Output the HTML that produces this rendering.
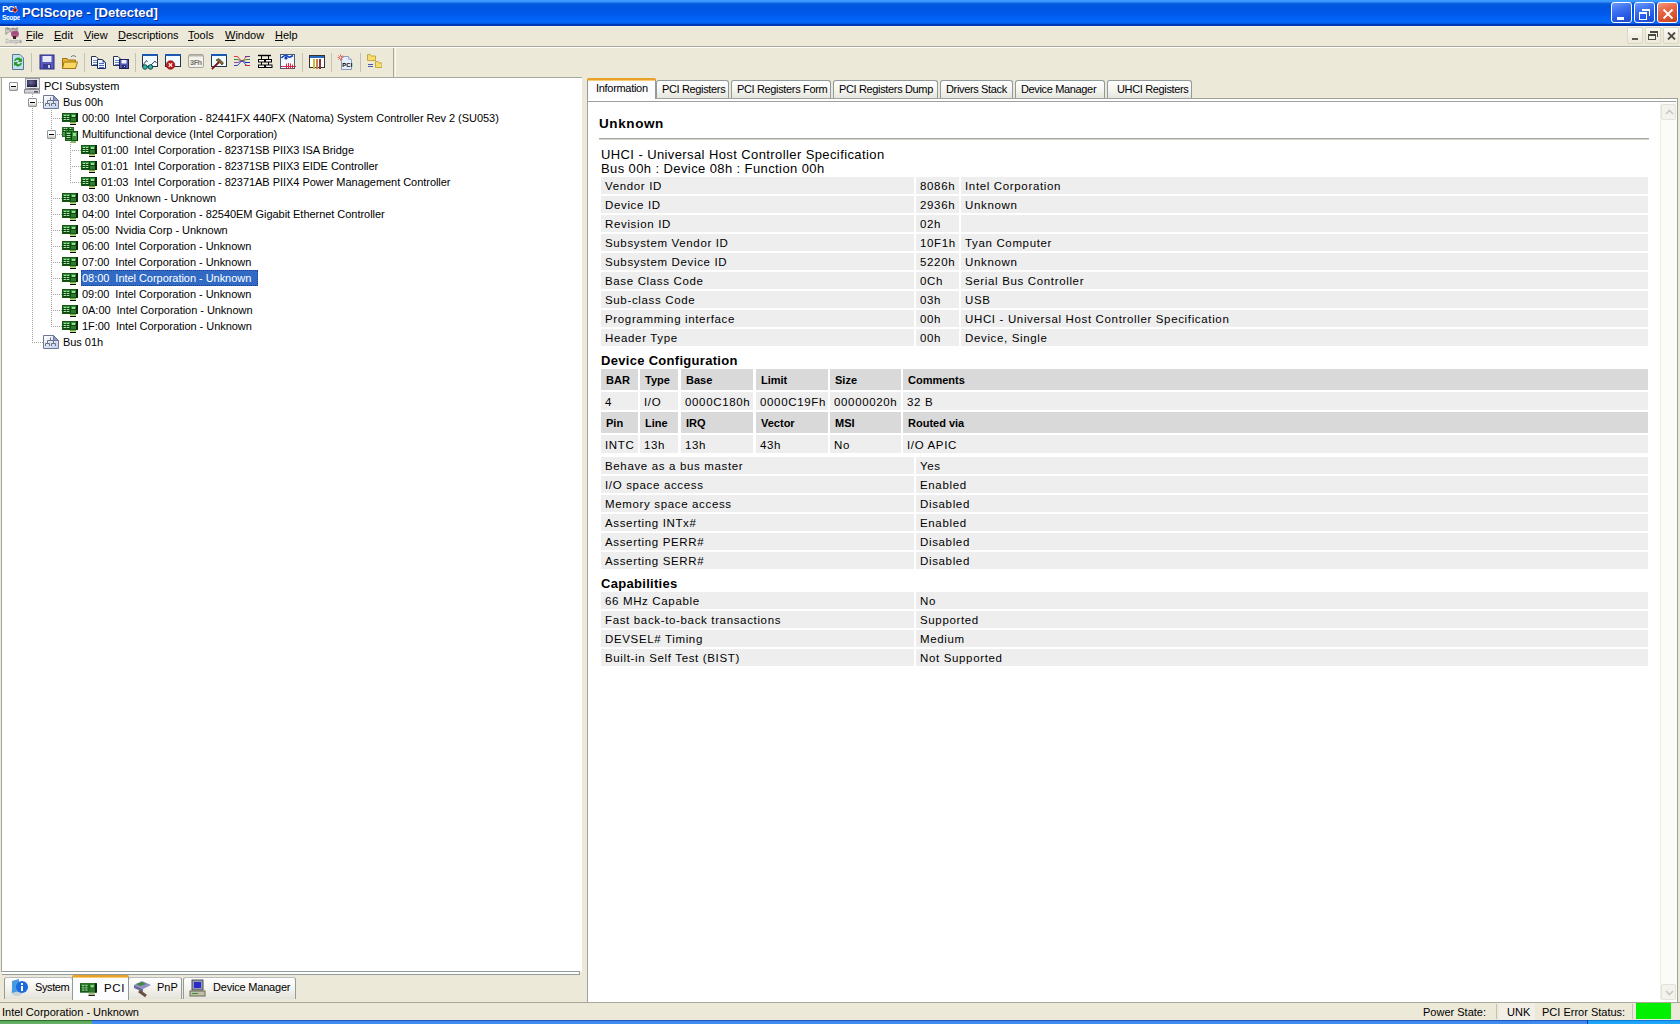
<!DOCTYPE html><html><head><meta charset="utf-8"><title>PCIScope</title><style>
*{box-sizing:border-box;margin:0;padding:0}
html,body{width:1680px;height:1024px;overflow:hidden;background:#ECE9D8;font-family:"Liberation Sans",sans-serif;font-size:11px;color:#000;position:relative}
.a{position:absolute}
.nw{white-space:nowrap}
#title{left:0;top:0;width:1680px;height:26px;background:linear-gradient(#3D9CFF 0px,#3A97FF 1.5px,#2478F0 2.5px,#0B62DD 3.5px,#005ADF 4.5px,#0055E2 7px,#0056E5 11px,#005BEE 15px,#0062F7 18px,#0866FA 22px,#0058E4 23.5px,#0038B4 24.5px,#0036B0 26px)}
#title .t{left:22px;top:5px;color:#fff;font-weight:bold;font-size:13px;line-height:16px;text-shadow:1px 1px 0 #0B2A8C}
.wb{top:2px;width:21px;height:21px;border:1px solid #fff;border-radius:3px;background:linear-gradient(160deg,#6B9BFA 0%,#3F73F0 35%,#2558E4 70%,#1D4CCB 100%)}
.mi{top:26px;line-height:16px;padding-top:1px}
.mdi{top:27px;width:16px;height:17px;border:1px solid #DCD8C6;border-radius:2px;background:linear-gradient(#FBFAF5,#ECE9D8)}
#tb{left:0;top:48px;width:394px;height:30px;border-bottom:1px solid #A9A798}
.sep{top:53px;width:1px;height:19px;background:#C5C2B2}
.tn{position:absolute;white-space:nowrap;font-size:11px;line-height:16px;height:16px;letter-spacing:-0.04px}
.ex{position:absolute;width:9px;height:9px;border:1px solid #929496;border-radius:1px;background:linear-gradient(#fff 45%,#C6C6C2)}
.ex:after{content:"";position:absolute;left:1px;top:3px;width:5px;height:1px;background:#000}
.dv{position:absolute;width:1px;background:repeating-linear-gradient(#A0A0A0 0 1px,transparent 1px 2px)}
.dh{position:absolute;height:1px;background:repeating-linear-gradient(90deg,#A0A0A0 0 1px,transparent 1px 2px)}
.tab{position:absolute;top:80px;height:18px;border:1px solid #919B9C;border-bottom:none;border-radius:3px 3px 0 0;background:linear-gradient(#FFFFFF,#F3F3EF 60%,#E6E5DE);line-height:17px;padding-left:5px;white-space:nowrap;letter-spacing:-0.35px}
.r{position:absolute;height:17px;background:#EEEEEE;white-space:nowrap;font-size:11.5px;letter-spacing:0.65px;line-height:18px;padding-left:4px}
.h{position:absolute;height:21px;background:#D9D9D9;white-space:nowrap;font-size:11px;font-weight:bold;line-height:23px;padding-left:5px}
.d{position:absolute;height:18px;background:#EEEEEE;white-space:nowrap;font-size:11.5px;letter-spacing:0.65px;line-height:21px;padding-left:4px}
.btab{position:absolute;top:977px;height:22px;border:1px solid #919B9C;border-top-color:#B8BCC0;border-bottom:none;border-radius:3px 3px 0 0;background:linear-gradient(#FFFFFF,#F1F0EA 60%,#E3E2DB);white-space:nowrap}
</style></head><body>
<svg width="0" height="0" style="position:absolute">
<defs>
<symbol id="card" viewBox="0 0 16 12">
<rect x="0" y="0" width="15" height="9" fill="#135A15"/>
<rect x="1" y="1" width="13" height="7" fill="#3A8A3A"/>
<g fill="#0E4A10"><rect x="1" y="3" width="7" height="1"/><rect x="1" y="5" width="7" height="1"/><rect x="1" y="7" width="7" height="1"/><rect x="8" y="1" width="1" height="7"/><rect x="9" y="4" width="5" height="1"/></g>
<g fill="#A8E4A8"><rect x="2" y="2" width="2" height="1"/><rect x="5" y="2" width="2" height="1"/><rect x="2" y="4" width="2" height="1"/><rect x="5" y="4" width="2" height="1"/><rect x="2" y="6" width="2" height="1"/><rect x="5" y="6" width="2" height="1"/></g>
<rect x="10" y="2" width="3" height="2" fill="#8FE08F"/>
<rect x="9" y="5" width="5" height="3" fill="#2E7A2E"/>
<rect x="14" y="0" width="2" height="9" fill="#062806"/>
<rect x="8" y="9" width="6" height="1" fill="#7AAA50"/>
<rect x="8" y="10" width="6" height="1" fill="#C8D890"/>
<rect x="8" y="11" width="6" height="1" fill="#000"/>
</symbol>
<symbol id="mcard" viewBox="0 0 16 16">
<rect x="0" y="0" width="12" height="10" fill="#2A6A2A"/>
<rect x="1" y="1" width="10" height="8" fill="#4A9A4A"/>
<g fill="#0E4A10"><rect x="1" y="2" width="10" height="1"/><rect x="1" y="4" width="4" height="1"/><rect x="6" y="1" width="1" height="3"/></g>
<g fill="#B0E8B0"><rect x="2" y="1" width="1" height="1"/><rect x="4" y="1" width="1" height="1"/><rect x="8" y="1" width="1" height="1"/><rect x="2" y="3" width="1" height="1"/></g>
<rect x="3" y="4" width="13" height="10" fill="#135A15"/>
<rect x="4" y="5" width="11" height="8" fill="#3A8A3A"/>
<g fill="#0E4A10"><rect x="4" y="7" width="5" height="1"/><rect x="4" y="9" width="5" height="1"/><rect x="4" y="11" width="5" height="1"/><rect x="9" y="5" width="1" height="8"/></g>
<g fill="#A8E4A8"><rect x="5" y="6" width="3" height="1"/><rect x="5" y="8" width="3" height="1"/><rect x="5" y="10" width="3" height="1"/></g>
<rect x="11" y="6" width="3" height="3" fill="#8FE08F"/>
<rect x="15" y="4" width="1" height="10" fill="#062806"/>
<rect x="9" y="14" width="5" height="2" fill="#8AB860"/>
</symbol>
<symbol id="comp" viewBox="0 0 16 16">
<defs><radialGradient id="scr" cx="0.4" cy="0.35" r="0.7"><stop offset="0" stop-color="#6A6898"/><stop offset="1" stop-color="#1E1C3A"/></radialGradient></defs>
<rect x="1.5" y="0.5" width="14" height="10" fill="#E4E4EC" stroke="#9A9AA4"/>
<rect x="3" y="2" width="10" height="7" fill="url(#scr)"/>
<rect x="5" y="10.5" width="7" height="1" fill="#5A5A60"/>
<rect x="0.5" y="11.5" width="15" height="3.5" fill="#D4D4D8" stroke="#8E8E94"/>
<rect x="10" y="13" width="4" height="1.5" fill="#5A5A60"/>
</symbol>
<symbol id="bus" viewBox="0 0 16 14">
<defs><linearGradient id="bg1" x1="0" y1="0" x2="0.6" y2="1"><stop offset="0" stop-color="#FFFFFF"/><stop offset="1" stop-color="#C8D4F0"/></linearGradient></defs>
<path d="M0.5 0.5H10.5L15.5 5.5V13.5H0.5Z" fill="url(#bg1)" stroke="#6A7890"/>
<path d="M10.5 0.5L15.5 5.5H10.5Z" fill="#8A9AB8" stroke="#5A6A88" stroke-width="0.8"/>
<path d="M7.5 2.5V5.5M4.5 5.5H10.5M4.5 5.5V8.5M10.5 5.5V8.5M2.5 8.5H6.5M8.5 8.5H12.5M2.5 8.5V11M6.5 8.5V11M8.5 8.5V11M12.5 8.5V11" stroke="#6A7380" fill="none"/>
</symbol>
</defs></svg>
<div id="title" class="a">
<svg class="a" style="left:1px;top:3px" width="19" height="18" viewBox="0 0 19 18">
<text x="1" y="9" font-family="Liberation Sans" font-weight="bold" font-size="9.5" fill="#fff" letter-spacing="-0.5">PCI</text>
<path d="M11 6h2V4h2v2h2v2h-2v2h-2V8h-2z" fill="#F06050"/>
<circle cx="14" cy="7" r="1.5" fill="#602020"/>
<text x="1" y="16.5" font-family="Liberation Sans" font-weight="bold" font-size="6.6" fill="#fff" letter-spacing="-0.35">Scope</text>
</svg>
<div class="t a nw">PCIScope - [Detected]</div>
<div class="wb a" style="left:1611px"><div class="a" style="left:5px;top:14px;width:7px;height:3px;background:#fff"></div></div>
<div class="wb a" style="left:1634px"><div class="a" style="left:4px;top:9px;width:8px;height:8px;border:1px solid #fff;border-top-width:2px"></div><div class="a" style="left:7px;top:6px;width:8px;height:7px;border-top:2px solid #fff;border-right:1px solid #fff"></div></div>
<div class="wb a" style="left:1657px;background:linear-gradient(160deg,#F29A7E 0%,#E86A48 35%,#D9532E 70%,#C5421E 100%)"><svg class="a" style="left:4px;top:5px" width="12" height="12" viewBox="0 0 12 12"><path d="M1.5 1.5L10.5 10.5M10.5 1.5L1.5 10.5" stroke="#fff" stroke-width="1.8"/></svg></div>
</div>
<svg class="a" style="left:3px;top:26px" width="19" height="19" viewBox="0 0 19 19">
<text x="2" y="8" font-family="Liberation Sans" font-weight="bold" font-size="8.5" fill="#F4F4F4" stroke="#333" stroke-width="0.35" letter-spacing="-0.5">PCI</text>
<ellipse cx="12" cy="8" rx="4" ry="3.5" fill="#A0407A" opacity="0.85"/>
<rect x="10" y="10" width="3" height="3" fill="#402030"/>
<text x="2" y="17" font-family="Liberation Sans" font-weight="bold" font-size="6" fill="#fff" stroke="#999" stroke-width="0.3" letter-spacing="-0.3">Scope</text>
</svg>
<div class="a mi nw" style="left:26px;top:26px"><u>F</u>ile</div>
<div class="a mi nw" style="left:54px;top:26px"><u>E</u>dit</div>
<div class="a mi nw" style="left:84px;top:26px"><u>V</u>iew</div>
<div class="a mi nw" style="left:118px;top:26px"><u>D</u>escriptions</div>
<div class="a mi nw" style="left:188px;top:26px"><u>T</u>ools</div>
<div class="a mi nw" style="left:225px;top:26px"><u>W</u>indow</div>
<div class="a mi nw" style="left:275px;top:26px"><u>H</u>elp</div>
<div class="a mdi" style="left:1627px"><div class="a" style="left:4px;top:10px;width:6px;height:2px;background:#5A5A50"></div></div>
<div class="a mdi" style="left:1645px"><div class="a" style="left:2px;top:6px;width:8px;height:6px;border:1px solid #4A4A40;border-top-width:2px"></div><div class="a" style="left:4px;top:3px;width:8px;height:6px;border-top:2px solid #4A4A40;border-right:1px solid #4A4A40"></div></div>
<div class="a mdi" style="left:1663px"><svg class="a" style="left:3px;top:4px" width="9" height="8" viewBox="0 0 9 8"><path d="M1 0.5L8 7.5M8 0.5L1 7.5" stroke="#4A4A40" stroke-width="1.8"/></svg></div>
<div class="a" style="left:0;top:26px;width:1680px;height:1px;background:#F4F2EA"></div>
<div class="a" style="left:0;top:46px;width:1680px;height:1px;background:#A9A798"></div>
<div class="a" style="left:0;top:47px;width:1680px;height:1px;background:#fff"></div>
<div id="tb" class="a"></div>
<div class="a" style="left:393px;top:48px;width:1px;height:29px;background:#A9A798"></div>
<div class="a" style="left:395px;top:48px;width:1px;height:29px;background:#FAF9F4"></div>
<div class="a sep" style="left:31px"></div>
<div class="a sep" style="left:84px"></div>
<div class="a sep" style="left:135px"></div>
<div class="a sep" style="left:302px"></div>
<div class="a sep" style="left:331px"></div>
<div class="a sep" style="left:360px"></div>
<svg class="a" style="left:10px;top:54px" width="16" height="16" viewBox="0 0 16 16"><path d="M2.5 0.5H10L13.5 4V15.5H2.5Z" fill="#BFE0F0" stroke="#5A7A90"/><path d="M4 7a4 4 0 0 1 7-2l1-1v4h-4l1.3-1.3A2.5 2.5 0 0 0 5.5 7Z" fill="#2A9A2A"/><path d="M12 9a4 4 0 0 1-7 2l-1 1v-4h4l-1.3 1.3A2.5 2.5 0 0 0 10.5 9Z" fill="#2A9A2A"/></svg>
<svg class="a" style="left:39px;top:54px" width="16" height="16" viewBox="0 0 16 16"><rect x="1" y="1" width="14" height="14" fill="#5A5AC0" stroke="#2A2A80"/><rect x="3.5" y="2" width="9" height="6" fill="#E8E8F8"/><rect x="4" y="10" width="8" height="5" fill="#3A3A90"/><rect x="9" y="11" width="2" height="3" fill="#D0D0F0"/></svg>
<svg class="a" style="left:62px;top:54px" width="16" height="16" viewBox="0 0 16 16"><path d="M0.5 4.5H5L6 6H13.5V14.5H0.5Z" fill="#E8B830" stroke="#9A7010"/><path d="M2 8H15.5L13.5 14.5H0.5Z" fill="#F8D860" stroke="#A07818"/><path d="M9 3a3 3 0 0 1 5 0" stroke="#5A7A9A" fill="none"/></svg>
<svg class="a" style="left:90px;top:54px" width="16" height="16" viewBox="0 0 16 16"><path d="M1.5 2.5H6L8.5 5V11.5H1.5Z" fill="#F4FAFF" stroke="#28304A"/><path d="M3 6.5H7M3 8.5H7M3 10.5H7" stroke="#6A88C8"/><path d="M7.5 5.5H12.5L15.5 8.5V14.5H7.5Z" fill="#EEF6FF" stroke="#1E2A5A"/><path d="M12.5 5.5V8.5H15.5Z" fill="#3A4A9A"/><path d="M9 9.5H14M9 11.5H14M9 13.5H14" stroke="#4A68C0"/></svg>
<svg class="a" style="left:113px;top:54px" width="16" height="16" viewBox="0 0 16 16"><path d="M0.5 2.5H5L7.5 5V11.5H0.5Z" fill="#F4FAFF" stroke="#28304A"/><path d="M2 6.5H6M2 8.5H6M2 10.5H6" stroke="#6A88C8"/><rect x="6.5" y="5.5" width="9" height="9" fill="#5058B0" stroke="#1E2060"/><rect x="8.5" y="6" width="5" height="3.5" fill="#F0F4FF"/><rect x="9" y="11" width="4" height="3" fill="#2A2E70"/><rect x="11" y="12" width="1" height="1" fill="#C0C8F0"/></svg>
<svg class="a" style="left:142px;top:54px" width="16" height="16" viewBox="0 0 16 16"><rect x="0.5" y="0.5" width="15" height="12" fill="#F0FAFF" stroke="#26344A"/><rect x="0" y="0" width="16" height="2" fill="#1A5AB0"/><path d="M1 11L4.5 6.5L5.5 8M9 11L13 7L14.5 9" stroke="#303838" fill="none" stroke-width="0.9"/><circle cx="3" cy="13" r="2.3" fill="#30B8A8" stroke="#0E3A3A" stroke-width="0.9"/><circle cx="8.5" cy="13" r="2.3" fill="#30B8A8" stroke="#0E3A3A" stroke-width="0.9"/></svg>
<svg class="a" style="left:165px;top:54px" width="16" height="16" viewBox="0 0 16 16"><rect x="0.5" y="0.5" width="15" height="12" fill="#F0FAFF" stroke="#26344A"/><rect x="0" y="0" width="16" height="2" fill="#1A5AB0"/><circle cx="5.5" cy="11" r="4.3" fill="#C01818" stroke="#700808" stroke-width="0.6"/><path d="M3.8 9.3L7.2 12.7M7.2 9.3L3.8 12.7" stroke="#FFE8E8" stroke-width="1.3"/></svg>
<svg class="a" style="left:188px;top:54px" width="16" height="16" viewBox="0 0 16 16"><rect x="0.5" y="0.5" width="15" height="13" rx="1.5" fill="#F2F1EA" stroke="#A8A69C"/><rect x="1" y="1" width="14" height="1.5" fill="#B8B6AC"/><text x="1.8" y="11" font-family="Liberation Mono" font-weight="bold" font-size="7.5" fill="#76746C" letter-spacing="-0.6">3Fh</text></svg>
<svg class="a" style="left:211px;top:54px" width="16" height="16" viewBox="0 0 16 16"><rect x="0.5" y="0.5" width="15" height="12" fill="#F0FAFF" stroke="#26344A"/><rect x="0" y="0" width="16" height="2" fill="#1A5AB0"/><path d="M0.8 15.2L8 8" stroke="#7A1010" stroke-width="1.8"/><path d="M5 6L8 4.5L12.5 9L11 11L9.5 9.5L7.5 8Z" fill="#7A6A30" stroke="#3A3010" stroke-width="0.6"/></svg>
<svg class="a" style="left:234px;top:54px" width="16" height="16" viewBox="0 0 16 16"><path d="M0 2.5H3C5 2.5 6 7 8 7S11 2.5 13 2.5H16" stroke="#D02828" fill="none" stroke-width="0.9"/><path d="M0 5.5H3C5 5.5 6 7 8 7S11 5.5 13 5.5H16" stroke="#208020" fill="none" stroke-width="0.9"/><path d="M0 8.5H3C5 8.5 6 7 8 7S11 8.5 13 8.5H16" stroke="#8030A0" fill="none" stroke-width="0.9"/><path d="M0 11.5H3C5 11.5 6 7 8 7S11 11.5 13 11.5H16" stroke="#2030C0" fill="none" stroke-width="0.9"/><path d="M11 2.5H16" stroke="#7030A0"/><path d="M11 8.5H16" stroke="#2030C0"/><path d="M11 11.5H16" stroke="#D02828"/></svg>
<svg class="a" style="left:257px;top:54px" width="16" height="16" viewBox="0 0 16 16"><path d="M1 1.5H14" stroke="#000" stroke-width="1.4"/><path d="M4.5 2V5.5M11.5 2V5.5M4.5 8V11M11.5 8V11" stroke="#000"/><rect x="1.5" y="5.5" width="6" height="2.5" fill="#fff" stroke="#000"/><rect x="8.5" y="5.5" width="6" height="2.5" fill="#fff" stroke="#000"/><rect x="1.5" y="11" width="6" height="2.5" fill="#fff" stroke="#000"/><rect x="8.5" y="11" width="6.5" height="2.5" fill="#fff" stroke="#000"/></svg>
<svg class="a" style="left:280px;top:54px" width="16" height="16" viewBox="0 0 16 16"><rect x="0.5" y="0.5" width="14" height="14" fill="#F4F8FF" stroke="#4A5A78"/><path d="M1.5 4C3 1.5 6 1 8 2.5C9 3.5 11 3 13 1.5" stroke="#1A4AC0" stroke-width="1.6" fill="none"/><circle cx="6" cy="4" r="1.6" fill="#1A3AA0"/><path d="M1 12.5H16M6.5 9.5V15M8.5 9V15M10.5 9.5V15M12.5 10.5V14" stroke="#D01838" fill="none" stroke-width="0.9"/></svg>
<svg class="a" style="left:309px;top:54px" width="16" height="16" viewBox="0 0 16 16"><rect x="0.5" y="1.5" width="15" height="12" fill="#fff" stroke="#333"/><rect x="1" y="2" width="14" height="2" fill="#2A6AC0"/><rect x="4" y="5" width="2" height="10" fill="#C8C030"/><rect x="7" y="5" width="2" height="10" fill="#D07A5A"/><rect x="10" y="5" width="2" height="10" fill="#7A3A3A"/></svg>
<svg class="a" style="left:337px;top:54px" width="16" height="16" viewBox="0 0 16 16"><path d="M4.5 2.5H11.5L14.5 5.5V15.5H4.5Z" fill="#E6EEFF" stroke="#8A9AB8"/><path d="M11.5 2.5V5.5H14.5" fill="#C8D8F0" stroke="#8A9AB8" stroke-width="0.6"/><text x="5.2" y="13.2" font-family="Liberation Sans" font-weight="bold" font-size="5.8" fill="#000" letter-spacing="0.2">PCI</text><path d="M3.5 0.5V6.5M0.5 3.5H6.5M1.5 1.5L5.5 5.5M5.5 1.5L1.5 5.5" stroke="#E84030" stroke-width="0.8"/><circle cx="3.5" cy="3.5" r="1" fill="#F4F2EA"/></svg>
<svg class="a" style="left:366px;top:54px" width="16" height="16" viewBox="0 0 16 16"><path d="M1.5 0.5H4L5 2H9.5V6.5H1.5Z" fill="#F4DC70" stroke="#C8A838"/><path d="M9.5 7.5H12L13 9H16V13.5H9.5Z" fill="#F4DC70" stroke="#C8A838"/><path d="M9.5 6.5V7.5" stroke="#C8A838"/><path d="M2 10.5H7M2 12.5H7" stroke="#5058B0"/></svg>
<div class="a" style="left:1px;top:77px;width:581px;height:895px;background:#fff;border-top:1px solid #A9A798;border-left:1px solid #A9A798"></div>
<div class="dv" style="left:32px;top:94px;height:248px"></div>
<div class="dv" style="left:51px;top:110px;height:216px"></div>
<div class="dv" style="left:70px;top:142px;height:40px"></div>
<div class="ex" style="left:9px;top:82px"></div>
<svg class="a" style="left:24px;top:78px" width="16" height="16"><use href="#comp"/></svg>
<div class="tn" style="left:44px;top:78px">PCI Subsystem</div>
<div class="dh" style="left:32px;top:102px;width:11px"></div>
<div class="ex" style="left:28px;top:98px"></div>
<svg class="a" style="left:43px;top:95px" width="16" height="14"><use href="#bus"/></svg>
<div class="tn" style="left:63px;top:94px">Bus 00h</div>
<div class="dh" style="left:51px;top:118px;width:11px"></div>
<svg class="a" style="left:62px;top:113px" width="16" height="12"><use href="#card"/></svg>
<div class="tn" style="left:82px;top:110px">00:00&nbsp; Intel Corporation - 82441FX 440FX (Natoma) System Controller Rev 2 (SU053)</div>
<div class="dh" style="left:51px;top:134px;width:11px"></div>
<div class="ex" style="left:47px;top:130px"></div>
<svg class="a" style="left:62px;top:127px" width="16" height="16"><use href="#mcard"/></svg>
<div class="tn" style="left:82px;top:126px">Multifunctional device (Intel Corporation)</div>
<div class="dh" style="left:70px;top:150px;width:11px"></div>
<svg class="a" style="left:81px;top:145px" width="16" height="12"><use href="#card"/></svg>
<div class="tn" style="left:101px;top:142px">01:00&nbsp; Intel Corporation - 82371SB PIIX3 ISA Bridge</div>
<div class="dh" style="left:70px;top:166px;width:11px"></div>
<svg class="a" style="left:81px;top:161px" width="16" height="12"><use href="#card"/></svg>
<div class="tn" style="left:101px;top:158px">01:01&nbsp; Intel Corporation - 82371SB PIIX3 EIDE Controller</div>
<div class="dh" style="left:70px;top:182px;width:11px"></div>
<svg class="a" style="left:81px;top:177px" width="16" height="12"><use href="#card"/></svg>
<div class="tn" style="left:101px;top:174px">01:03&nbsp; Intel Corporation - 82371AB PIIX4 Power Management Controller</div>
<div class="dh" style="left:51px;top:198px;width:11px"></div>
<svg class="a" style="left:62px;top:193px" width="16" height="12"><use href="#card"/></svg>
<div class="tn" style="left:82px;top:190px">03:00&nbsp; Unknown - Unknown</div>
<div class="dh" style="left:51px;top:214px;width:11px"></div>
<svg class="a" style="left:62px;top:209px" width="16" height="12"><use href="#card"/></svg>
<div class="tn" style="left:82px;top:206px">04:00&nbsp; Intel Corporation - 82540EM Gigabit Ethernet Controller</div>
<div class="dh" style="left:51px;top:230px;width:11px"></div>
<svg class="a" style="left:62px;top:225px" width="16" height="12"><use href="#card"/></svg>
<div class="tn" style="left:82px;top:222px">05:00&nbsp; Nvidia Corp - Unknown</div>
<div class="dh" style="left:51px;top:246px;width:11px"></div>
<svg class="a" style="left:62px;top:241px" width="16" height="12"><use href="#card"/></svg>
<div class="tn" style="left:82px;top:238px">06:00&nbsp; Intel Corporation - Unknown</div>
<div class="dh" style="left:51px;top:262px;width:11px"></div>
<svg class="a" style="left:62px;top:257px" width="16" height="12"><use href="#card"/></svg>
<div class="tn" style="left:82px;top:254px">07:00&nbsp; Intel Corporation - Unknown</div>
<div class="dh" style="left:51px;top:278px;width:11px"></div>
<svg class="a" style="left:62px;top:273px" width="16" height="12"><use href="#card"/></svg>
<div class="tn" style="left:81px;top:270px;width:177px;background:#316AC5;color:#fff;padding-left:1px;outline:1px dotted #1A3E90;outline-offset:-1px">08:00&nbsp; Intel Corporation - Unknown</div>
<div class="dh" style="left:51px;top:294px;width:11px"></div>
<svg class="a" style="left:62px;top:289px" width="16" height="12"><use href="#card"/></svg>
<div class="tn" style="left:82px;top:286px">09:00&nbsp; Intel Corporation - Unknown</div>
<div class="dh" style="left:51px;top:310px;width:11px"></div>
<svg class="a" style="left:62px;top:305px" width="16" height="12"><use href="#card"/></svg>
<div class="tn" style="left:82px;top:302px">0A:00&nbsp; Intel Corporation - Unknown</div>
<div class="dh" style="left:51px;top:326px;width:11px"></div>
<svg class="a" style="left:62px;top:321px" width="16" height="12"><use href="#card"/></svg>
<div class="tn" style="left:82px;top:318px">1F:00&nbsp; Intel Corporation - Unknown</div>
<div class="dh" style="left:32px;top:342px;width:11px"></div>
<svg class="a" style="left:43px;top:335px" width="16" height="14"><use href="#bus"/></svg>
<div class="tn" style="left:63px;top:334px">Bus 01h</div>
<div class="a" style="left:2px;top:971px;width:578px;height:4px;border-top:1px solid #919B9C;border-bottom:1px solid #919B9C;background:#fff;border-right:1px solid #919B9C"></div>
<div class="btab" style="left:4px;width:69px"></div>
<div class="btab" style="left:128px;width:54px"></div>
<div class="btab" style="left:183px;width:113px"></div>
<div class="btab" style="left:72px;top:975px;height:25px;width:57px;background:#FCFCFE;border-top:none"><div class="a" style="left:-1px;top:0;width:57px;height:2px;background:#E8A028;border-radius:3px 3px 0 0"></div><div class="a" style="left:0;top:2px;width:55px;height:1px;background:#F8CC70"></div></div>
<div class="a nw" style="left:35px;top:979px;line-height:16px;letter-spacing:-0.4px">System</div>
<div class="a nw" style="left:104px;top:980px;line-height:16px;font-size:11.5px;letter-spacing:0.6px">PCI</div>
<div class="a nw" style="left:157px;top:979px;line-height:16px">PnP</div>
<div class="a nw" style="left:213px;top:979px;line-height:16px;letter-spacing:-0.2px">Device Manager</div>
<svg class="a" style="left:10px;top:978px" width="19" height="19" viewBox="0 0 19 19"><ellipse cx="7" cy="14" rx="6" ry="4" fill="#C8D0D8"/><path d="M2 3L9 1V13L2 15Z" fill="#4A9AE0"/><circle cx="12" cy="9" r="6" fill="#1A6AE0"/><rect x="11" y="8" width="2" height="5" fill="#fff"/><rect x="11" y="5" width="2" height="2" fill="#fff"/></svg>
<svg class="a" style="left:80px;top:983px" width="17" height="13"><use href="#card"/></svg>
<svg class="a" style="left:133px;top:979px" width="19" height="19" viewBox="0 0 19 19"><path d="M1 6L9 2L18 6L10 10Z" fill="#9090C8"/><path d="M1 6V9L10 13V10Z" fill="#6A6AA0"/><path d="M3 5L9 3L13 5L7 7Z" fill="#3A8A3A"/><path d="M6 12L13 17" stroke="#6A5040" stroke-width="3"/></svg>
<svg class="a" style="left:189px;top:979px" width="17" height="18" viewBox="0 0 17 18"><rect x="3" y="1" width="11" height="10" fill="#9A9AB0" stroke="#4A4A5A"/><rect x="5" y="3" width="7" height="6" fill="#2A2AC8"/><rect x="1" y="12" width="15" height="5" fill="#C0C0A8" stroke="#6A6A50"/><rect x="3" y="14" width="6" height="1" fill="#3A8A3A"/></svg>
<div class="a" style="left:587px;top:98px;width:1091px;height:904px;background:#fff;border:1px solid #9EA29C;border-bottom:none"></div>
<div class="a" style="left:588px;top:101px;width:1088px;height:1px;background:#A0A0A0"></div>
<div class="tab" style="left:656px;width:73px;padding-left:5px">PCI Registers</div>
<div class="tab" style="left:731px;width:100px;padding-left:5px">PCI Registers Form</div>
<div class="tab" style="left:833px;width:105px;padding-left:5px">PCI Registers Dump</div>
<div class="tab" style="left:940px;width:73px;padding-left:5px">Drivers Stack</div>
<div class="tab" style="left:1015px;width:90px;padding-left:5px">Device Manager</div>
<div class="tab" style="left:1107px;width:85px;padding-left:9px">UHCI Registers</div>
<div class="a" style="left:587px;top:78px;width:69px;height:21px;background:#FCFCFE;border-left:1px solid #919B9C;border-right:1px solid #919B9C;border-radius:3px 3px 0 0"><div class="a" style="left:-1px;top:0;width:69px;height:2px;background:#E8A028;border-radius:3px 3px 0 0"></div><div class="a" style="left:0;top:2px;width:67px;height:1px;background:#F8CC70"></div><div class="a nw" style="left:8px;top:3px;line-height:14px;letter-spacing:-0.3px">Information</div></div>
<div class="a" style="left:1660px;top:103px;width:17px;height:897px;background:#FBFBF8;border-left:1px solid #EEEDE5"></div>
<div class="a" style="left:1661px;top:104px;width:15px;height:16px;border:1px solid #E4E3DA;border-radius:2px;background:#F3F2EC"><svg class="a" style="left:3px;top:4px" width="9" height="6" viewBox="0 0 9 6"><path d="M1 5L4.5 1.5L8 5" stroke="#C8C8C0" stroke-width="1.6" fill="none"/></svg></div>
<div class="a" style="left:1661px;top:984px;width:15px;height:16px;border:1px solid #E4E3DA;border-radius:2px;background:#F3F2EC"><svg class="a" style="left:3px;top:5px" width="9" height="6" viewBox="0 0 9 6"><path d="M1 1L4.5 4.5L8 1" stroke="#C8C8C0" stroke-width="1.6" fill="none"/></svg></div>
<div class="a nw" style="left:599px;top:115px;font-size:13.5px;font-weight:bold;line-height:18px;letter-spacing:0.6px">Unknown</div>
<div class="a" style="left:599px;top:138px;width:1050px;height:1px;background:#A6A69E"></div>
<div class="a" style="left:599px;top:139px;width:1050px;height:1px;background:#D6D6CE"></div>
<div class="a nw" style="left:601px;top:148px;font-size:13px;line-height:14px;letter-spacing:0.4px">UHCI - Universal Host Controller Specification<br>Bus 00h : Device 08h : Function 00h</div>
<div class="r" style="left:601px;top:177px;width:313px">Vendor ID</div>
<div class="r" style="left:916px;top:177px;width:43px">8086h</div>
<div class="r" style="left:961px;top:177px;width:687px">Intel Corporation</div>
<div class="r" style="left:601px;top:196px;width:313px">Device ID</div>
<div class="r" style="left:916px;top:196px;width:43px">2936h</div>
<div class="r" style="left:961px;top:196px;width:687px">Unknown</div>
<div class="r" style="left:601px;top:215px;width:313px">Revision ID</div>
<div class="r" style="left:916px;top:215px;width:43px">02h</div>
<div class="r" style="left:961px;top:215px;width:687px"></div>
<div class="r" style="left:601px;top:234px;width:313px">Subsystem Vendor ID</div>
<div class="r" style="left:916px;top:234px;width:43px">10F1h</div>
<div class="r" style="left:961px;top:234px;width:687px">Tyan Computer</div>
<div class="r" style="left:601px;top:253px;width:313px">Subsystem Device ID</div>
<div class="r" style="left:916px;top:253px;width:43px">5220h</div>
<div class="r" style="left:961px;top:253px;width:687px">Unknown</div>
<div class="r" style="left:601px;top:272px;width:313px">Base Class Code</div>
<div class="r" style="left:916px;top:272px;width:43px">0Ch</div>
<div class="r" style="left:961px;top:272px;width:687px">Serial Bus Controller</div>
<div class="r" style="left:601px;top:291px;width:313px">Sub-class Code</div>
<div class="r" style="left:916px;top:291px;width:43px">03h</div>
<div class="r" style="left:961px;top:291px;width:687px">USB</div>
<div class="r" style="left:601px;top:310px;width:313px">Programming interface</div>
<div class="r" style="left:916px;top:310px;width:43px">00h</div>
<div class="r" style="left:961px;top:310px;width:687px">UHCI - Universal Host Controller Specification</div>
<div class="r" style="left:601px;top:329px;width:313px">Header Type</div>
<div class="r" style="left:916px;top:329px;width:43px">00h</div>
<div class="r" style="left:961px;top:329px;width:687px">Device, Single</div>
<div class="a nw" style="left:601px;top:353px;font-size:13px;font-weight:bold;line-height:16px;letter-spacing:0.3px">Device Configuration</div>
<div class="h" style="left:601px;top:369px;width:37px;height:21px">BAR</div>
<div class="h" style="left:640px;top:369px;width:38px;height:21px">Type</div>
<div class="h" style="left:681px;top:369px;width:72px;height:21px">Base</div>
<div class="h" style="left:756px;top:369px;width:72px;height:21px">Limit</div>
<div class="h" style="left:830px;top:369px;width:71px;height:21px">Size</div>
<div class="h" style="left:903px;top:369px;width:745px;height:21px">Comments</div>
<div class="d" style="left:601px;top:392px;width:37px;height:18px">4</div>
<div class="d" style="left:640px;top:392px;width:38px;height:18px">I/O</div>
<div class="d" style="left:681px;top:392px;width:72px;height:18px">0000C180h</div>
<div class="d" style="left:756px;top:392px;width:72px;height:18px">0000C19Fh</div>
<div class="d" style="left:830px;top:392px;width:71px;height:18px">00000020h</div>
<div class="d" style="left:903px;top:392px;width:745px;height:18px">32 B</div>
<div class="h" style="left:601px;top:412px;width:37px;height:21px">Pin</div>
<div class="h" style="left:640px;top:412px;width:38px;height:21px">Line</div>
<div class="h" style="left:681px;top:412px;width:72px;height:21px">IRQ</div>
<div class="h" style="left:756px;top:412px;width:72px;height:21px">Vector</div>
<div class="h" style="left:830px;top:412px;width:71px;height:21px">MSI</div>
<div class="h" style="left:903px;top:412px;width:745px;height:21px">Routed via</div>
<div class="d" style="left:601px;top:435px;width:37px;height:18px">INTC</div>
<div class="d" style="left:640px;top:435px;width:38px;height:18px">13h</div>
<div class="d" style="left:681px;top:435px;width:72px;height:18px">13h</div>
<div class="d" style="left:756px;top:435px;width:72px;height:18px">43h</div>
<div class="d" style="left:830px;top:435px;width:71px;height:18px">No</div>
<div class="d" style="left:903px;top:435px;width:745px;height:18px">I/O APIC</div>
<div class="r" style="left:601px;top:457px;width:313px">Behave as a bus master</div>
<div class="r" style="left:916px;top:457px;width:732px">Yes</div>
<div class="r" style="left:601px;top:476px;width:313px">I/O space access</div>
<div class="r" style="left:916px;top:476px;width:732px">Enabled</div>
<div class="r" style="left:601px;top:495px;width:313px">Memory space access</div>
<div class="r" style="left:916px;top:495px;width:732px">Disabled</div>
<div class="r" style="left:601px;top:514px;width:313px">Asserting INTx#</div>
<div class="r" style="left:916px;top:514px;width:732px">Enabled</div>
<div class="r" style="left:601px;top:533px;width:313px">Asserting PERR#</div>
<div class="r" style="left:916px;top:533px;width:732px">Disabled</div>
<div class="r" style="left:601px;top:552px;width:313px">Asserting SERR#</div>
<div class="r" style="left:916px;top:552px;width:732px">Disabled</div>
<div class="a nw" style="left:601px;top:576px;font-size:13px;font-weight:bold;line-height:16px;letter-spacing:0.3px">Capabilities</div>
<div class="r" style="left:601px;top:592px;width:313px">66 MHz Capable</div>
<div class="r" style="left:916px;top:592px;width:732px">No</div>
<div class="r" style="left:601px;top:611px;width:313px">Fast back-to-back transactions</div>
<div class="r" style="left:916px;top:611px;width:732px">Supported</div>
<div class="r" style="left:601px;top:630px;width:313px">DEVSEL# Timing</div>
<div class="r" style="left:916px;top:630px;width:732px">Medium</div>
<div class="r" style="left:601px;top:649px;width:313px">Built-in Self Test (BIST)</div>
<div class="r" style="left:916px;top:649px;width:732px">Not Supported</div>
<div class="a" style="left:0;top:1002px;width:1680px;height:1px;background:#A9A798"></div>
<div class="a nw" style="left:2px;top:1005px;line-height:14px">Intel Corporation - Unknown</div>
<div class="a nw" style="left:1423px;top:1005px;line-height:14px">Power State:</div>
<div class="a" style="left:1496px;top:1004px;width:1px;height:15px;background:#C5C2B2"></div>
<div class="a" style="left:1499px;top:1003px;width:36px;height:17px;background:#F1EFE6"></div>
<div class="a nw" style="left:1507px;top:1005px;line-height:14px">UNK</div>
<div class="a nw" style="left:1542px;top:1005px;line-height:14px">PCI Error Status:</div>
<div class="a" style="left:1632px;top:1004px;width:1px;height:15px;background:#C5C2B2"></div>
<div class="a" style="left:1636px;top:1003px;width:35px;height:16px;background:#00F000"></div>
<div class="a" style="left:0;top:1020px;width:92px;height:4px;background:linear-gradient(#2F6F2F 0,#2F6F2F 1px,#58A658 1px,#6AB46A 4px)"></div>
<div class="a" style="left:92px;top:1020px;width:1495px;height:4px;background:linear-gradient(#1F55C5 0,#1F55C5 1px,#3A84EC 1px,#4290F2 4px)"></div>
<div class="a" style="left:1587px;top:1020px;width:1px;height:4px;background:#0A3A9A"></div>
<div class="a" style="left:1588px;top:1020px;width:92px;height:4px;background:linear-gradient(#0B78D8 0,#0B78D8 1px,#18A0F8 1px,#20A8FA 4px)"></div>
</body></html>
